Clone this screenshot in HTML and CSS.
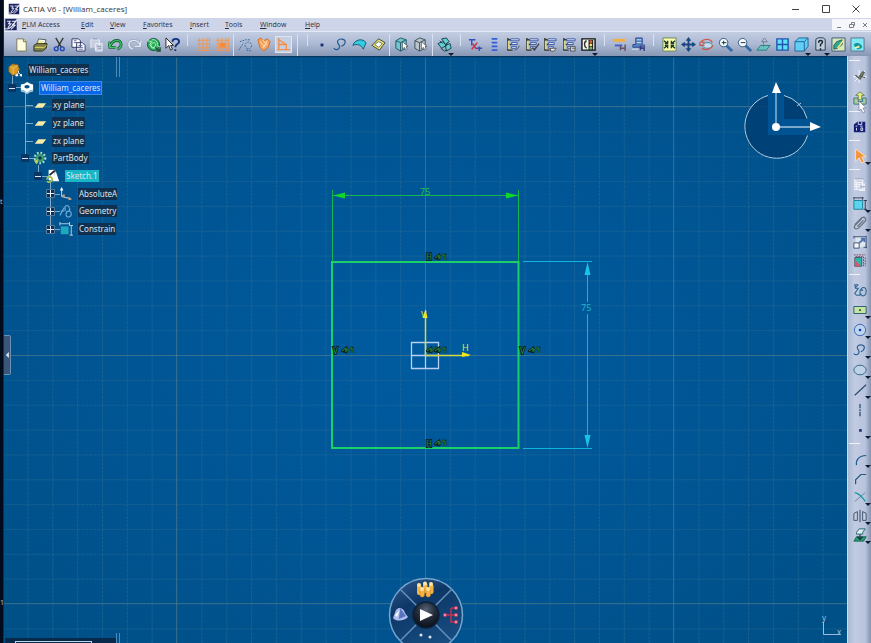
FILE: index.html
```html
<!DOCTYPE html>
<html lang="en">
<head>
<meta charset="utf-8">
<title>CATIA V6 - [William_caceres]</title>
<link rel="stylesheet" href="styles.css">
</head>
<body>
<svg class="defs" aria-hidden="true">
<defs>
<symbol id="logo" viewBox="0 0 16 16"><path d="M1 1h14v14H1z" fill="#1d2460"/><path d="M3 4h4L5 7h3L4 12M9 4h5l-4 4 3 1-5 5M0 13c5 2 10-2 15-11" fill="none" stroke="#e6ebf7" stroke-width="1.3"/></symbol>
<symbol id="new" viewBox="0 0 16 16"><path d="M3 2h7l3 3v10H3z" fill="#fffce0" stroke="#77775a"/><path d="M10 2v3h3" fill="#ddd9a0" stroke="#77775a"/></symbol>
<symbol id="print" viewBox="0 0 16 16"><path d="M6 2l8 1-2 5H4z" fill="#fff" stroke="#555"/><path d="M1 9l3-2h11l-1 5-4 3H1z" fill="#80804a" stroke="#30301a"/><path d="M2 11h9M11 12l3-3M6 4l5 1M5 6h5" stroke="#e8e36a"/></symbol>
<symbol id="cut" viewBox="0 0 16 16"><path d="M4 1l6 10M12 1L6 11" stroke="#333" stroke-width="1.4"/><circle cx="4.500" cy="12.500" r="2" fill="none" stroke="#1d48b8" stroke-width="1.5"/><circle cx="11" cy="12.500" r="2" fill="none" stroke="#1d48b8" stroke-width="1.500"/></symbol>
<symbol id="copy" viewBox="0 0 16 16"><path d="M1 2h7l2 2v7H1zM6 6h6l3 3v6H6z" fill="#fff" stroke="#313760"/><path d="M3 4h3M3 6h3M8 9h4M8 11h5M8 13h5" stroke="#5868a6"/></symbol>
<symbol id="paste" viewBox="0 0 16 16"><path d="M2 3h9v9H2zM7 7h7v8H7z" fill="#c6cddd" stroke="#e8edf7"/><path d="M4 2h5M9 10h4M9 12h4M2 12h4" stroke="#8994ad"/></symbol>
<symbol id="undo" viewBox="0 0 16 16"><path d="M1 5l1 6h6M2 10c3-8 12-8 12-2 0 3-2 4-4 5" fill="none" stroke="#16613a" stroke-width="3"/><path d="M1 5l1 6h6M2 10c3-8 12-8 12-2 0 3-2 4-4 5" fill="none" stroke="#42c967" stroke-width="1.300"/></symbol>
<symbol id="redo" viewBox="0 0 16 16"><path d="M15 4l-1 6H8M14 9C12 2 2 2 2 8c0 3 2 4 4 5" fill="none" stroke="#9aa5bd" stroke-width="3"/><path d="M15 4l-1 6H8M14 9C12 2 2 2 2 8c0 3 2 4 4 5" fill="none" stroke="#e1e7f1" stroke-width="1.500"/></symbol>
<symbol id="update" viewBox="0 0 16 16"><circle cx="8" cy="8" r="6.500" fill="#28ac57" stroke="#125432"/><path d="M2 4l4 1-2 3 3 4 5-1M6 3c5-1 7 3 6 6l3 2M8 6c3 0 3 4 0 5s-4-4 0-5" fill="none" stroke="#b7f5cf"/><path d="M10 11l5 4M11 15h4v-4" fill="none" stroke="#125432" stroke-width="1.500"/></symbol>
<symbol id="help" viewBox="0 0 16 16"><path d="M1 1v11l3-3 2 5 2-1-2-4h3z" fill="#fff" stroke="#222"/><path d="M8 5c0-4 7-4 7 0 0 3-4 2-4 6M11 13v2" fill="none" stroke="#153080" stroke-width="2"/></symbol>
<symbol id="grid" viewBox="0 0 16 16"><path d="M1 3.500h14M1 7.500h14M1 11.500h14M3.500 1v14M7.500 1v14M11.500 1v14M14.500 1v14M1 14.500h14" stroke="#f4974f"/></symbol>
<symbol id="snap" viewBox="0 0 16 16"><use href="#grid"/><path d="M5 6h6v5H5z" fill="#f58b36"/></symbol>
<symbol id="construct" viewBox="0 0 16 16"><circle cx="11" cy="9" r="3.500" fill="none" stroke="#3268a2" stroke-dasharray="2 1"/><path d="M1 14l5-8M2 5l6-2 5 0M9 14l6 1" fill="none" stroke="#3268a2" stroke-dasharray="2 1"/></symbol>
<symbol id="geocon" viewBox="0 0 16 16"><path d="M1 3l3-2 3 3 4-2 3 3-2 6-5 4-4-4z" fill="#f5a35f" stroke="#d46b23"/><path d="M3 5l6 6M6 3l5 6M11 4L6 12" stroke="#ffe1bc"/></symbol>
<symbol id="dimcon" viewBox="0 0 16 16"><path d="M3 1v13M3 8h8v6M1 13.500h14M3 3l8 5" fill="none" stroke="#f18e48" stroke-width="1.400"/></symbol>
<symbol id="dot" viewBox="0 0 16 16"><path d="M7 7h3v3H7z" fill="#152d70"/></symbol>
<symbol id="spline" viewBox="0 0 16 16"><path d="M1 12c2 3 6 1 6-2 0-2-3-3-2-6 2-3 8-2 8 1s-2 4-4 5" fill="none" stroke="#1c5791" stroke-width="1.200"/></symbol>
<symbol id="surface" viewBox="0 0 16 16"><path d="M1 9c1-5 9-9 14-3l-3 7c-2-5-7-6-11-4z" fill="#32cce1" stroke="#145875"/></symbol>
<symbol id="volume" viewBox="0 0 16 16"><path d="M1 9l7-7 7 4-6 8z" fill="#f3df71" stroke="#3d4938"/><path d="M4 8l4-3 4 2-4 4z" fill="#fff" stroke="#597f62"/></symbol>
<symbol id="select3d" viewBox="0 0 16 16"><path d="M2 4l5-3 6 2v9l-6 3-5-3z" fill="#72c8d1" stroke="#245465"/><path d="M7 15V6l6-3M7 6L2 4" fill="none" stroke="#245465"/><path d="M9 5v8l2-2 2 3 1-1-1-3h2z" fill="#fff" stroke="#333" stroke-width=".6"/></symbol>
<symbol id="gray3d" viewBox="0 0 16 16"><path d="M2 4l5-3 6 2v9l-6 3-5-3z" fill="#bbc5c9" stroke="#35505c"/><path d="M7 15V6l6-3M7 6L2 4" fill="none" stroke="#35505c"/><path d="M9 5v8l2-2 2 3 1-1-1-3h2z" fill="#fff" stroke="#333" stroke-width=".6"/></symbol>
<symbol id="assembly" viewBox="0 0 16 16"><path d="M5 2l5-1 3 4-4 3zM1 7l5-2 4 4-5 3zM9 9l5-2 1 5-5 3z" fill="#62cfd1" stroke="#163f49"/><path d="M4 12l4 3 3-1M3 4l3 3M11 6l-2 4" fill="none" stroke="#163f49"/></symbol>
<symbol id="cutpart" viewBox="0 0 16 16"><path d="M1 3h7M4 3v6M9 12h6M12 10v5" stroke="#304dc4" stroke-width="1.500"/><path d="M4 13l6-7M5 7l4 6" stroke="#d22845" stroke-width="1.500"/></symbol>
<symbol id="list" viewBox="0 0 16 16"><path d="M5 2h6M5 6h6M5 10h6M5 14h6" stroke="#345edb" stroke-width="2"/></symbol>
<symbol id="tree0" viewBox="0 0 16 16"><path d="M2 1v13h5M2 3h5M2 8h4" fill="none" stroke="#343827" stroke-width="1.500"/><path d="M3 4v9" stroke="#d9d68d" stroke-width="2"/><path d="M5 2h9v2H5zM6 6h6v2H6zM6 10h5v2H6z" fill="#eef1ff" stroke="#3958a5"/></symbol>
<symbol id="tree1" viewBox="0 0 16 16"><use href="#tree0"/><path d="M9 14c3 0 5-3 5-5" fill="none" stroke="#555"/></symbol>
<symbol id="tree2" viewBox="0 0 16 16"><use href="#tree0"/><path d="M8 11l2 3 5-7" fill="none" stroke="#444" stroke-width="1.500"/></symbol>
<symbol id="tree3" viewBox="0 0 16 16"><use href="#tree0"/><path d="M8 12h6l-2 3H8z" fill="#eee" stroke="#555"/></symbol>
<symbol id="tree4" viewBox="0 0 16 16"><use href="#tree0"/><path d="M9 10h5v5H9zM11 12h3" fill="#ccd" stroke="#555"/></symbol>
<symbol id="book" viewBox="0 0 16 16"><path d="M1 2h14v12H1z" fill="#f8f8ef" stroke="#111" stroke-width="1.500"/><path d="M6 4c-3 1-3 6 0 8" fill="none" stroke="#333" stroke-width="1.500"/><path d="M8 3h5v11H8z" fill="#222"/><circle cx="10.500" cy="5" r="1.500" fill="#d86a35"/><circle cx="10.500" cy="8.500" r="1.500" fill="#ffd968"/><circle cx="10.500" cy="12" r="1.500" fill="#60b777"/></symbol>
<symbol id="measure" viewBox="0 0 16 16"><path d="M1 2h13v3H1z" fill="#f5ad3c"/><path d="M3 8h8v2H3z" fill="#425fcc"/><path d="M9 9v5M14 8v7M9 12h5" stroke="#6a4d65" stroke-width="1.500"/></symbol>
<symbol id="measure2" viewBox="0 0 16 16"><path d="M5 1h7v10H2V8h3z" fill="#557fb6" stroke="#2b4aa2"/><path d="M6 3h5M6 6h5M1 13h7" stroke="#d2e5fa"/><path d="M10 9v5M14 8v7M10 12h4" stroke="#353b7d" stroke-width="1.500"/></symbol>
<symbol id="fit" viewBox="0 0 16 16"><path d="M1 1h14v14H1z" fill="#fff9a8" stroke="#608a58"/><path d="M2 4l4 3M14 4l-4 3M2 12l4-3M14 12l-4-3M3 7h3V4M10 4v3h3M3 9h3v3M13 9h-3v3" fill="none" stroke="#153f34" stroke-width="1.500"/></symbol>
<symbol id="pan" viewBox="0 0 16 16"><path d="M8 2v12M2 8h12" stroke="#1b477f" stroke-width="2"/><path d="M8 0l3 4H5zM8 16l3-4H5zM0 8l4-3v6zM16 8l-4-3v6z" fill="#1b477f"/></symbol>
<symbol id="rotate" viewBox="0 0 16 16"><ellipse cx="9" cy="9" rx="5" ry="3" fill="#c4dff0" stroke="#487c97"/><path d="M2 5c4-4 11-3 12 1M2 5l4 1M1 5v4h5M3 12c4 3 10 1 12-3" fill="none" stroke="#cf5949" stroke-width="1.400"/></symbol>
<symbol id="zoomin" viewBox="0 0 16 16"><circle cx="6" cy="6" r="4.500" fill="#f5fcff" stroke="#315777"/><path d="M9 9l6 6" stroke="#326caa" stroke-width="3"/><path d="M4 6h5M6 4v4" stroke="#132b48"/></symbol>
<symbol id="zoomout" viewBox="0 0 16 16"><circle cx="6" cy="6" r="4.500" fill="#f5fcff" stroke="#315777"/><path d="M9 9l6 6" stroke="#326caa" stroke-width="3"/><path d="M4 6h5" stroke="#132b48"/></symbol>
<symbol id="normal" viewBox="0 0 16 16"><path d="M1 14l4-5h10l-4 5z" fill="#6cc2bd" stroke="#277a80"/><path d="M8 11V4M6 5l3-4 3 4z" fill="#c0cbdb" stroke="#708095"/></symbol>
<symbol id="views" viewBox="0 0 16 16"><path d="M2 2h12v12H2zM8 2v12M2 8h12" fill="#5ce1f7" stroke="#2455af" stroke-width="1.500"/></symbol>
<symbol id="cube" viewBox="0 0 16 16"><path d="M1 5l4-4h10v9l-4 5H1z" fill="#62cef5" stroke="#20649a"/><path d="M1 5h10v10M11 5l4-4" fill="none" stroke="#20649a"/></symbol>
<symbol id="question" viewBox="0 0 16 16"><path d="M3 3c0-3 10-3 10 0v11H3z" fill="#bfccda" stroke="#26384d"/><path d="M6 6c0-3 5-3 4 0L8 8v2M8 12v2" fill="none" stroke="#13202c" stroke-width="1.500"/></symbol>
<symbol id="hide" viewBox="0 0 16 16"><path d="M1 1h14v14H1z" fill="#d8e9b8" stroke="#3f5877"/><path d="M3 9l3-4 6-2v5l-5 4-4 1z" fill="#35a68d" stroke="#216367"/><path d="M7 12l6-8" fill="none" stroke="#ffe687" stroke-width="1.500"/></symbol>
<symbol id="show" viewBox="0 0 16 16"><path d="M1 1h14v14H1z" fill="#83e8f6" stroke="#55738c"/><path d="M4 8c4-4 9 0 9 3-4 4-7 2-9-3z" fill="#14959d"/><path d="M5 12l5-2" stroke="#fff7a1" stroke-width="2"/></symbol>
<symbol id="axis" viewBox="0 0 16 16"><path d="M0 9h16M7 1v15M2 14L14 2" stroke="#f8faff"/><path d="M3 7l3 3 5-7 2 1-5 8z" fill="#7e8d5c" stroke="#3c3e3c"/><path d="M8 8l6 2" stroke="#444"/></symbol>
<symbol id="exit" viewBox="0 0 16 16"><path d="M1 8h5v4h5V8h4v7H1z" fill="#b6c89a" stroke="#267187"/><path d="M6 10V5H3l5-4 5 4h-3v5z" fill="#eded7d" stroke="#627f51"/></symbol>
<symbol id="catalog" viewBox="0 0 16 16"><path d="M1 5l4-3h9v12H1z" fill="#151d75"/><path d="M6 2v3h4V2M3 7h2M8 7h3M4 9v3M9 9h2v3H9z" fill="none" stroke="#e7efff"/></symbol>
<symbol id="arrow" viewBox="0 0 16 16"><path d="M3 0v14l4-4 3 6 3-1-3-6h5z" fill="#f39237" stroke="#ffe2c6"/></symbol>
<symbol id="dialog" viewBox="0 0 16 16"><path d="M2 2h9v3H2zM2 7h5v3H2zM7 7h6v7H7M1 13h10M4 4v8M11 5v8" fill="none" stroke="#eef1f7" stroke-width="1.500"/><path d="M2 1h10M9 10h5" stroke="#939db4"/></symbol>
<symbol id="constrain" viewBox="0 0 16 16"><path d="M1 4h10v10H1z" fill="#59d5ef" stroke="#16778e"/><path d="M1 1h11M1 0v3M11 0v3M14 4v11M12 4h4M12 14h4" stroke="#22334c"/></symbol>
<symbol id="clip" viewBox="0 0 16 16"><path d="M2 10l8-8c4-2 6 2 3 5l-7 7c-4 2-6-1-3-4l7-7M5 12l7-7" fill="none" stroke="#697483" stroke-width="1.500"/></symbol>
<symbol id="animate" viewBox="0 0 16 16"><path d="M3 2h11v12H3z" fill="#dbe6ed"/><path d="M1 2h14M1 1v3M15 1v14M12 14h4" stroke="#34456f"/><path d="M1 9h6v6H1z" fill="#f4f8fa" stroke="#34456f"/><path d="M7 9l6-5M9 4h4v4" fill="none" stroke="#4d70ae" stroke-width="2"/></symbol>
<symbol id="multi" viewBox="0 0 16 16"><path d="M2 4h8v10H2z" fill="#28b7ad" stroke="#425064"/><path d="M2 6l7 8H2z" fill="#d8596f"/><path d="M1 1h13M3 3h9v12M14 4v10" fill="none" stroke="#7b384d" stroke-dasharray="2 1"/></symbol>
<symbol id="profile" viewBox="0 0 16 16"><path d="M6 2H2l1 4h3L2 12l2 2h4V9c0-2 3-2 3 0M6 2l-4 4M9 9c0-5 6-5 6 0 0 7-6 7-6 3" fill="none" stroke="#276490" stroke-width="1.200"/></symbol>
<symbol id="rect" viewBox="0 0 16 16"><path d="M1 4h14v8H1z" fill="#c6e5a0" stroke="#175368"/><path d="M7 7h2v2H7z" fill="#264a33"/></symbol>
<symbol id="circle" viewBox="0 0 16 16"><circle cx="8" cy="8" r="6.500" fill="#bbd4ef" stroke="#315fa3"/><circle cx="8" cy="8" r="1.500" fill="#1841a0"/></symbol>
<symbol id="ellipse" viewBox="0 0 16 16"><ellipse cx="8" cy="8" rx="7" ry="5.500" fill="#bed2e7" stroke="#295b7e"/></symbol>
<symbol id="line" viewBox="0 0 16 16"><path d="M2 14L15 2" stroke="#24466b" stroke-width="1.200"/></symbol>
<symbol id="dash" viewBox="0 0 16 16"><path d="M8 1v14" stroke="#1f4770" stroke-width="1.400" stroke-dasharray="5 1 2 1"/></symbol>
<symbol id="corner" viewBox="0 0 16 16"><path d="M4 15c-1-6 3-11 11-11" fill="none" stroke="#195d8a" stroke-width="1.400"/></symbol>
<symbol id="chamfer" viewBox="0 0 16 16"><path d="M3 15v-5l6-6h6" fill="none" stroke="#205c7b" stroke-width="1.400"/></symbol>
<symbol id="trim" viewBox="0 0 16 16"><path d="M2 13L14 3" stroke="#687c9d"/><path d="M2 3c6 1 9 6 12 10" fill="none" stroke="#119c9b" stroke-width="1.500"/></symbol>
<symbol id="mirror" viewBox="0 0 16 16"><path d="M1 5l4-2v10H1zM15 5l-4-2v10h4z" fill="#c3d1df" stroke="#354765"/><path d="M8 1v14" stroke="#24355a"/></symbol>
<symbol id="project" viewBox="0 0 16 16"><path d="M1 15l3-5h11l-3 5z" fill="#289b72" stroke="#14624c"/><path d="M4 5l3-4h7l-3 4v2H4z" fill="#dceeee" stroke="#175c68"/><path d="M8 7v6M5 10l3 3 3-3" fill="none" stroke="#1e3448" stroke-width="1.300"/></symbol>
<symbol id="minus" viewBox="0 0 8 8"><path d="M0 0h8v8H0z" fill="#0b3564"/><path d="M1 4.500h6" stroke="#d8e6f4"/></symbol>
<symbol id="plus" viewBox="0 0 9 9"><path d="M.5.5h8v8h-8z" fill="#0b3158" stroke="#56799c"/><path d="M1 4.500h7M4.500 1v7" stroke="#e5eef6"/></symbol>
<symbol id="product" viewBox="0 0 16 16"><path d="M1 5l4-4 6 1 2 5-3 6-5 1-4-4z" fill="#d69826" stroke="#80601f"/><path d="M6 6l5-3M6 6v7M2 4l4 2" stroke="#efc65d"/><path d="M12 9v2l-2 3M12 11l3 3" stroke="#fff" fill="none"/><circle cx="10" cy="14" r="1.500" fill="#fff"/><circle cx="15" cy="14" r="1.500" fill="#fff"/></symbol>
<symbol id="part" viewBox="0 0 16 16"><path d="M1 4l4-1 3-2 4 2 3 1v6l-4 1-3 3-3-3-4-1z" fill="#f8ffff"/><path d="M1 10l4 1 3 3 3-3 4-1v2l-4 1-3 2-3-2-4-1z" fill="#a4c8e0"/><ellipse cx="8" cy="6.500" rx="3" ry="2" fill="#0a4e84"/></symbol>
<symbol id="plane" viewBox="0 0 16 16"><path d="M2 11l4-5h9l-4 5z" fill="#f7eba9"/></symbol>
<symbol id="gear" viewBox="0 0 16 16"><circle cx="8" cy="8" r="4.500" fill="#3e9d72"/><circle cx="8" cy="8" r="6" fill="none" stroke="#a8e1bf" stroke-width="2.500" stroke-dasharray="2 2"/><circle cx="8" cy="8" r="2" fill="#10354b"/><path d="M1 11l5-2-2 6z" fill="#bdcc56"/></symbol>
<symbol id="sketch" viewBox="0 0 16 16"><path d="M3 1h7v12H3z" fill="#fff"/><path d="M11 2l4 12H8z" fill="#fff"/><path d="M4 7l6-5" stroke="#222" stroke-width="2"/><path d="M1 12c1-4 6-4 6 0 0 3-4 4-6 2" fill="none" stroke="#9fc34c" stroke-width="2"/></symbol>
<symbol id="axes" viewBox="0 0 16 16"><path d="M3 2v9l9 2" fill="none" stroke="#d7e9f0"/><path d="M1 4l2-4 2 4z" fill="#fff"/><path d="M3 10l3-2 1 3zM11 11l4 3-4 1z" fill="#f0a070"/></symbol>
<symbol id="geo" viewBox="0 0 16 16"><path d="M1 13l5-9M2 8h4M7 8V3c3-4 6 2 5 5M8 12c0-5 6-5 6-1 0 5-6 5-6 1z" fill="none" stroke="#71abd8" stroke-width="1.300"/></symbol>
<symbol id="folder" viewBox="0 0 16 16"><path d="M2 5h9v9H2z" fill="#1fa7c0"/><path d="M1 2h11M1 0v4M12 0v4M14 4v11M12 4h4M12 15h4" stroke="#bbdbe9"/></symbol>
<symbol id="lock" viewBox="0 0 14 8"><path d="M1 5l4-3v4zM5 4h3M8 2h3v5" fill="none" stroke="#09251c" stroke-width="2.500"/><path d="M1 5l4-3v4M5 4h3M8 2h3v5" fill="none" stroke="#2d9142"/></symbol>
</defs>
</svg>

<div class="app">
  <aside class="edge"><span>t</span><span>1</span></aside>
  <div class="window">
    <header class="titlebar">
      <svg class="logo"><use href="#logo"/></svg>
      <h1>CATIA V6 - [William_caceres]</h1>
      <div class="window-controls">
        <button aria-label="Minimize"><svg viewBox="0 0 10 10"><path d="M1 5.500h7"/></svg></button>
        <button aria-label="Maximize"><svg viewBox="0 0 10 10"><path d="M1.500 1.500h7v7h-7z"/></svg></button>
        <button aria-label="Close"><svg viewBox="0 0 10 10"><path d="M1.500 1.500l7 7M8.500 1.500l-7 7"/></svg></button>
      </div>
    </header>
    <nav class="menubar">
      <svg class="logo menu-logo"><use href="#logo"/></svg>
      <button class="plm"><u>P</u>LM Access</button><button><u>E</u>dit</button><button><u>V</u>iew</button><button class="fav"><u>F</u>avorites</button><button><u>I</u>nsert</button><button><u>T</u>ools</button><button class="wide"><u>W</u>indow</button><button><u>H</u>elp</button>
      <div class="doc-controls">
        <button aria-label="Minimize document"><svg viewBox="0 0 8 8"><path d="M2 6.500h4"/></svg></button>
        <button aria-label="Restore document"><svg viewBox="0 0 8 8"><path d="M1.500 3.500h4v3h-4zM3.500 3V1.500h3v3H6"/></svg></button>
        <button aria-label="Close document"><svg viewBox="0 0 8 8"><path d="M2 2l4 4M6 2L2 6"/></svg></button>
      </div>
    </nav>
    <div class="toolbar" role="toolbar" aria-label="Standard">
      <button aria-label="New"><svg><use href="#new"/></svg></button><button aria-label="Print"><svg><use href="#print"/></svg></button><button aria-label="Cut"><svg><use href="#cut"/></svg></button><button aria-label="Copy"><svg><use href="#copy"/></svg></button><button aria-label="Paste"><svg><use href="#paste"/></svg></button><button aria-label="Undo"><svg><use href="#undo"/></svg></button><button aria-label="Redo"><svg><use href="#redo"/></svg></button><button aria-label="Update"><svg><use href="#update"/></svg></button><button aria-label="Help"><svg><use href="#help"/></svg></button>
      <i class="sep handle"></i>
      <button aria-label="Grid"><svg><use href="#grid"/></svg></button><button aria-label="Snap to point"><svg><use href="#snap"/></svg></button>
      <i class="sep rule"></i>
      <button aria-label="Construction element"><svg><use href="#construct"/></svg></button><button aria-label="Geometrical constraints"><svg><use href="#geocon"/></svg></button><button class="active" aria-label="Dimensional constraints"><svg><use href="#dimcon"/></svg></button>
      <i class="sep rule handle double"></i>
      <button aria-label="Point filter"><svg><use href="#dot"/></svg></button><button aria-label="Curve filter"><svg><use href="#spline"/></svg></button><button aria-label="Surface filter"><svg><use href="#surface"/></svg></button><button aria-label="Volume filter"><svg><use href="#volume"/></svg></button>
      <i class="sep rule"></i>
      <button aria-label="Feature filter"><svg><use href="#select3d"/></svg></button><button aria-label="Geometry filter"><svg><use href="#gray3d"/></svg></button>
      <i class="sep rule"></i>
      <button class="more" aria-label="Assembly"><svg><use href="#assembly"/></svg></button>
      <i class="sep handle"></i>
      <button aria-label="Cut link"><svg><use href="#cutpart"/></svg></button><button aria-label="List"><svg><use href="#list"/></svg></button><button aria-label="Reorder"><svg><use href="#tree1"/></svg></button><button aria-label="Check tree"><svg><use href="#tree2"/></svg></button><button aria-label="Expand tree"><svg><use href="#tree3"/></svg></button><button aria-label="Collapse tree"><svg><use href="#tree4"/></svg></button><button class="more" aria-label="Catalog"><svg><use href="#book"/></svg></button>
      <i class="sep handle"></i>
      <button aria-label="Measure between"><svg><use href="#measure"/></svg></button><button aria-label="Measure item"><svg><use href="#measure2"/></svg></button>
      <i class="sep handle"></i>
      <button aria-label="Fit all"><svg><use href="#fit"/></svg></button><button aria-label="Pan"><svg><use href="#pan"/></svg></button><button aria-label="Rotate"><svg><use href="#rotate"/></svg></button><button aria-label="Zoom in"><svg><use href="#zoomin"/></svg></button><button aria-label="Zoom out"><svg><use href="#zoomout"/></svg></button><button aria-label="Normal view"><svg><use href="#normal"/></svg></button><button aria-label="Multi-view"><svg><use href="#views"/></svg></button><button class="more" aria-label="Isometric view"><svg><use href="#cube"/></svg></button><button class="more" aria-label="View mode"><svg><use href="#question"/></svg></button><button aria-label="Hide or show"><svg><use href="#hide"/></svg></button><button aria-label="Swap visible space"><svg><use href="#show"/></svg></button>
    </div>

    <div class="workspace">
      <main class="canvas">
        <svg class="drawing" viewBox="4 56 843 587" preserveAspectRatio="xMidYMid slice" aria-label="Sketch">
          <defs>
            <radialGradient id="sea" cx=".5" cy=".5" r=".65"><stop offset="0" stop-color="#005ba0"/><stop offset=".5" stop-color="#005695"/><stop offset="1" stop-color="#005088"/></radialGradient>
            <pattern id="minor" x="425" y="355" width="24.850" height="24.850" patternUnits="userSpaceOnUse"><path d="M0 .5h25M.5 0v25" stroke="#3f7897" stroke-opacity=".36" stroke-dasharray="3 1"/></pattern>
          </defs>
          <path d="M4 56h844v587H4z" fill="url(#sea)"/>
          <path d="M4 56h844v587H4z" fill="url(#minor)"/>
          <path d="M176.500 56v587M425.500 56v587M673.500 56v587M4 106.500h844M4 355.500h844M4 603.500h844" stroke="#6d8c84" stroke-opacity=".4"/>
          <path d="M4 56.500h844" stroke="#003965" stroke-width="2"/>

          <g fill="none" stroke="#19c740"><path d="M332.500 190v72M518.500 190v72M333 195.500h185" stroke-opacity=".85"/><path d="M332 262h186.500v186H332z" stroke="#1bd066" stroke-width="2"/></g>
          <path d="M333 195.500l12-3v6zM518 195.500l-12-3v6z" fill="#12d52c"/>
          <path d="M523 261.500h69M523 448.500h69M587.500 265v37M587.500 314v130" stroke="#13b4dc"/>
          <path d="M587.500 262l-3 13h6zM587.500 448l-3-13h6z" fill="#18c4e6"/>
          <text class="dim green" x="420" y="195">75</text>
          <text class="dim cyan" x="581" y="311">75</text>

          <path d="M411.500 342.500h27v26h-27zM411 355.500h28M425.500 342v27" fill="none" stroke="#b7cff1" stroke-width="1.300"/>
          <path d="M425.500 355.500V314M425 355.500h44" stroke="#d8d844" stroke-width="1.500"/>
          <path d="M425.500 309l-3 9h5zM471 355l-9-3v5z" fill="#f0e621"/>
          <text class="dim axis" x="421" y="318">V</text><text class="dim axis" x="462" y="351">H</text>
          <g class="constraint"><text x="426" y="260">H</text><text x="426" y="447">H</text><text x="333" y="354">V</text><text x="520" y="354">V</text></g>
          <use href="#lock" x="434" y="253" width="14" height="8"/><use href="#lock" x="434" y="439" width="14" height="8"/><use href="#lock" x="341" y="346" width="14" height="8"/><use href="#lock" x="528" y="346" width="14" height="8"/><use href="#lock" x="426" y="346" width="14" height="8"/><use href="#lock" x="434" y="346" width="14" height="8"/>

          <circle cx="776" cy="126.500" r="32" fill="#003f73" fill-opacity=".85"/>
          <path d="M768 90h16v29h30v16h-46z" fill="#005393"/>
          <path d="M784 119V96c12 3 20 11 23 23z" fill="#003f73"/>
          <path d="M768 95.500a32 32 0 1 0 39.500 40M784 95.500a32 32 0 0 1 23 23M797 106l4-3" fill="none" stroke="#b3cee3"/>
          <path d="M776 126V91M776 127h36" stroke="#a4c3dc" stroke-width="1.300"/>
          <circle cx="776" cy="127" r="4" fill="#fff"/><path d="M776 82l-4 11h9zM821 127l-11-5v9z" fill="#fff"/>
          <path d="M823.500 622v12.500h17" fill="none" stroke="#9abddd"/>
          <text class="tag" x="822" y="621">y</text><text class="tag" x="837" y="635">x</text>
        </svg>

        <aside class="tree-panel">
          <svg class="branches" viewBox="0 0 116 177"><path d="M8.500 15v10M12 26.500h9M21.500 31v66M22 44.500h7M22 62.500h7M22 80.500h7M25 97.500h6M34.500 104v11M38 115.500h7M46.500 122v50M50 133.500h6M50 150.500h6M50 168.500h6"/></svg>
          <ul class="tree">
            <li class="root"><svg><use href="#product"/></svg><span>William_caceres</span></li>
            <li class="l1"><button aria-label="Collapse"><svg><use href="#minus"/></svg></button><svg><use href="#part"/></svg><span class="selected">William_caceres</span></li>
            <li class="l2"><svg><use href="#plane"/></svg><span>xy plane</span></li>
            <li class="l2"><svg><use href="#plane"/></svg><span>yz plane</span></li>
            <li class="l2"><svg><use href="#plane"/></svg><span>zx plane</span></li>
            <li class="body"><button aria-label="Collapse"><svg><use href="#minus"/></svg></button><svg><use href="#gear"/></svg><span>PartBody</span></li>
            <li class="l3"><button aria-label="Collapse"><svg><use href="#minus"/></svg></button><svg><use href="#sketch"/></svg><span class="current">Sketch.1</span></li>
            <li class="l4"><button aria-label="Expand"><svg><use href="#plus"/></svg></button><svg><use href="#axes"/></svg><span>AbsoluteA</span></li>
            <li class="l4"><button aria-label="Expand"><svg><use href="#plus"/></svg></button><svg><use href="#geo"/></svg><span>Geometry</span></li>
            <li class="l4"><button aria-label="Expand"><svg><use href="#plus"/></svg></button><svg><use href="#folder"/></svg><span>Constrain</span></li>
          </ul>
        </aside>
        <i class="splitter"></i><i class="splitter bottom"></i>
        <button class="drawer" aria-label="Open side panel"><svg viewBox="0 0 5 8"><path d="M5 0v8L1 4z" fill="#dce9f5"/></svg></button>
        <div class="dock"><i></i></div>

        <div class="wheel">
          <svg viewBox="0 0 76 76" class="wheel-art" aria-hidden="true">
            <defs><linearGradient id="disc" x2=".5" y2="1"><stop stop-color="#355f91"/><stop offset=".4" stop-color="#0d3767"/><stop offset="1" stop-color="#174d81"/></linearGradient><radialGradient id="play" cx=".5" cy=".3" r=".7"><stop stop-color="#586579"/><stop offset=".5" stop-color="#222b38"/><stop offset="1" stop-color="#080f18"/></radialGradient></defs>
            <circle cx="38" cy="38" r="36.500" fill="url(#disc)" stroke="#76a5d0" stroke-width="1.500"/>
            <path d="M12 12l17 17M64 12L47 29M12 64l17-17M64 64L47 47" stroke="#668fba" stroke-width="1.500"/>
            <circle cx="38" cy="38" r="13" fill="url(#play)" stroke="#0c223b" stroke-width="1.500"/>
            <path d="M32 32l13 6-13 6z" fill="#fff"/>
            <g fill="#f6b543"><rect x="29" y="8" width="4.500" height="10" rx="2"/><rect x="35" y="6" width="4.500" height="10" rx="2"/><rect x="41" y="7" width="4.500" height="10" rx="2"/><rect x="32" y="11" width="4.500" height="9" rx="2" stroke="#c58128" stroke-width=".5"/><rect x="38" y="11" width="4.500" height="9" rx="2" stroke="#c58128" stroke-width=".5"/></g><g fill="#ffe59f"><circle cx="31" cy="8" r="2"/><circle cx="37" cy="6.500" r="2"/><circle cx="43" cy="7" r="2"/><circle cx="34" cy="12" r="2"/><circle cx="40" cy="12" r="2"/></g>
            <path d="M5 41l3-8c4-4 8-1 9 3l3 4c-3 4-12 5-15 1z" fill="#aebbf0"/><path d="M12 31l6 8-7 3z" fill="#5974be"/><path d="M7 38l5-5-3 7z" fill="#fff"/>
            <path d="M57 38h13M63 31h7M63 31v14h7" fill="none" stroke="#bf3154" stroke-width="1.500"/><g fill="#f08aa1" stroke="#bf3154" stroke-width=".8"><circle cx="57" cy="38" r="1.700"/><circle cx="68" cy="31" r="1.700"/><circle cx="68" cy="38" r="1.700"/><circle cx="68" cy="45" r="1.700"/></g>
            <circle cx="33" cy="58" r="1.500" fill="#dce7ec"/><circle cx="42" cy="60" r="1.500" fill="#dce7ec"/>
          </svg>
          <button class="north" aria-label="Community"></button><button class="west" aria-label="Model"></button><button class="middle" aria-label="Play"></button><button class="east" aria-label="Structure"></button>
        </div>
      </main>

      <div class="sidebar" role="toolbar" aria-label="Sketch tools">
        <div class="group first"><button aria-label="Work on support"><svg><use href="#axis"/></svg></button><button aria-label="Exit workbench"><svg><use href="#exit"/></svg></button></div>
        <div class="group"><button aria-label="Catalog browser"><svg><use href="#catalog"/></svg></button></div>
        <div class="group"><button class="more" aria-label="Select"><svg><use href="#arrow"/></svg></button></div>
        <div class="group"><button aria-label="Constraint dialog"><svg><use href="#dialog"/></svg></button><button class="more" aria-label="Constraint"><svg><use href="#constrain"/></svg></button><button class="more" aria-label="Fix together"><svg><use href="#clip"/></svg></button><button aria-label="Animate constraint"><svg><use href="#animate"/></svg></button><button aria-label="Edit multi-constraint"><svg><use href="#multi"/></svg></button></div>
        <div class="group spaced"><button aria-label="Profile"><svg><use href="#profile"/></svg></button><button class="more" aria-label="Rectangle"><svg><use href="#rect"/></svg></button><button class="more" aria-label="Circle"><svg><use href="#circle"/></svg></button><button class="more" aria-label="Spline"><svg><use href="#spline"/></svg></button><button class="more" aria-label="Ellipse"><svg><use href="#ellipse"/></svg></button><button class="more" aria-label="Line"><svg><use href="#line"/></svg></button><button aria-label="Axis"><svg><use href="#dash"/></svg></button><button class="more" aria-label="Point"><svg><use href="#dot"/></svg></button></div>
        <div class="group"><button class="more" aria-label="Corner"><svg><use href="#corner"/></svg></button><button aria-label="Chamfer"><svg><use href="#chamfer"/></svg></button><button class="more" aria-label="Trim"><svg><use href="#trim"/></svg></button><button class="more" aria-label="Mirror"><svg><use href="#mirror"/></svg></button><button class="more" aria-label="Project"><svg><use href="#project"/></svg></button></div>
        <svg class="cursor" viewBox="0 0 9 14" aria-hidden="true"><path d="M1 1v10l2-2 2 4 2-1-2-4h3z" fill="#fff" stroke="#63718a" stroke-width=".6"/></svg>
      </div>
    </div>
  </div>
</div>
</body>
</html>
```
FILE: styles.css
```css
* { box-sizing: border-box; }
body { margin: 0; overflow: hidden; background: #005493; font-family: "Noto Sans", "Open Sans", sans-serif; }
h1, ul { margin: 0; padding: 0; font: inherit; }
button { padding: 0; border: 0; background: none; color: inherit; font: inherit; }
svg { display: block; }
.defs { position: absolute; width: 0; height: 0; }

.app { display: flex; height: 100vh; }
.edge { flex: 0 0 4px; display: grid; grid-template-rows: 206px 401px 1fr; overflow: hidden; background: #020b1c; border-right: 1px solid #0b3154; color: #b9c2ca; font-size: 7px; line-height: 8px; }
.edge span { align-self: end; }
.window { flex: 1; min-width: 0; display: flex; flex-direction: column; }

.titlebar { display: flex; align-items: center; height: 18px; padding-left: 4px; background: #fff; color: #30323a; font-family: "Open Sans", sans-serif; font-size: 8px; line-height: 12px; }
.logo { width: 12px; height: 12px; margin-right: 3px; }
.window-controls { display: flex; margin-left: auto; }
.window-controls button { width: 30px; height: 16px; display: grid; place-items: center; }
.window-controls svg { width: 10px; height: 10px; }
.window-controls path, .doc-controls path { fill: none; stroke: #404047; stroke-width: 1; }

.menubar { display: flex; align-items: center; height: 13px; background: #cfd5e9; color: #292d3c; font-family: "Open Sans", sans-serif; font-size: 7px; line-height: 12px; }
.menu-logo { width: 14px; height: 13px; margin-right: 4px; flex: none; }
.menubar > button { width: 30px; margin-right: 9px; text-align: left; white-space: nowrap; height: 13px; }
.menubar > button:nth-of-type(2) { width: 20px; }
.menubar > button:nth-of-type(3) { width: 24px; }
.menubar > .plm { width: 50px; }
.menubar > .fav { width: 38px; }
.menubar > button:nth-of-type(5), .menubar > button:nth-of-type(6) { width: 26px; }
.menubar > .wide { width: 36px; }
.menubar u { text-underline-offset: 1px; }
.doc-controls { display: flex; height: 11px; margin-left: auto; background: #f6f7fb; }
.doc-controls button { width: 13px; display: grid; place-items: center; }
.doc-controls svg { width: 8px; height: 8px; }
.doc-controls path { stroke: #777e8e; }

.toolbar { display: flex; height: 25px; padding: 1px 4px 0 8px; align-items: center; border-top: 1px solid #e3e9f5; background: linear-gradient(#c3cde2, #acb9d3 50%, #8797b5); }
.toolbar button { position: relative; flex: 1 1 0; min-width: 0; height: 22px; display: grid; place-items: center; }
.toolbar button svg { width: 15px; height: 15px; }
.toolbar .active svg { background: #c6cfe1; outline: 1px solid #dfe5f0; }
.sep { flex: 0 0 5px; height: 22px; display: flex; justify-content: center; }
.sep.handle { flex-basis: 12px; }
.sep.double { flex-basis: 19px; justify-content: space-around; }
.sep::before { content: ""; width: 1px; height: 22px; background: #d8e1ef; }
.sep.handle::before { height: 12px; }
.sep.double::before { height: 22px; }
.sep.double::after { content: ""; width: 1px; height: 12px; background: #d8e1ef; }
.more::after { content: ""; position: absolute; right: 0; bottom: 0; border: 3px solid transparent; border-top-color: #111b2d; border-bottom: 0; }

.workspace { flex: 1; display: flex; min-height: 0; }
.canvas { position: relative; flex: 1; min-width: 0; overflow: hidden; background: #005493; }
.drawing { position: absolute; inset: 0; width: 100%; height: 100%; }
.dim { font-size: 9px; }
.green { fill: #1bc444; }
.cyan { fill: #20b4cb; }
.axis { fill: #dde34e; }
.constraint { fill: #2d9142; stroke: #09251c; stroke-width: 2px; paint-order: stroke; font-size: 8px; }
.tag { fill: #9fbfdb; font-size: 8px; }

.tree-panel { position: relative; width: 113px; height: 182px; padding-top: 5px; overflow: hidden; }
.branches { position: absolute; left: 0; top: 5px; width: 116px; height: 177px; fill: none; stroke: #7fa7c8; }
.tree { position: relative; height: 177px; display: grid; grid-template-rows: repeat(10, 1fr); list-style: none; color: #dce5ec; font-size: 8px; line-height: 12px; white-space: nowrap; }
.tree li { display: flex; align-items: center; gap: 4px; }
.tree li > svg { width: 14px; height: 14px; flex: none; }
.tree li button svg { width: 8px; height: 8px; }
.tree li.l4 button svg { width: 9px; height: 9px; }
.tree span { background: #10304f; padding: 0 1px; }
.tree .selected { background: #0867eb; outline: 1px solid #4089e0; }
.tree .current { background: #19b7c5; }
.tree .root { padding-left: 4px; gap: 6px; }
.tree .l1 { padding-left: 4px; }
.tree .l1 span { margin-left: 2px; }
.tree .l2 { padding-left: 29px; gap: 5px; }
.tree .body { padding-left: 17px; }
.tree .body span { margin-left: 1px; }
.tree .l3 { padding-left: 30px; }
.tree .l3 span { margin-left: 1px; }
.tree .l4 { padding-left: 42px; }
.tree .l4 span { margin-left: 1px; }
.splitter { position: absolute; left: 112px; top: 1px; width: 4px; height: 20px; border: 1px solid #4e8bb9; border-width: 0 1px; }
.splitter.bottom { top: auto; bottom: 0; height: 10px; }
.drawer { position: absolute; left: 0; top: 279px; width: 7px; height: 40px; display: grid; place-items: center; border: 1px solid #6d91b1; border-left: 0; border-radius: 0 2px 2px 0; background: #39577a; }
.drawer svg { width: 4px; height: 6px; }
.dock { position: absolute; left: 1px; bottom: 0; width: 111px; height: 5px; padding: 3px 0 0 10px; background: #06294c; }
.dock i { display: block; width: 77px; height: 2px; border: 1px solid #c2d4e2; border-bottom: 0; }

.wheel { position: absolute; left: 50%; bottom: -10px; width: 76px; height: 76px; margin-left: -38px; display: grid; grid-template: repeat(3, 1fr) / repeat(3, 1fr); }
.wheel-art { position: absolute; inset: 0; width: 76px; height: 76px; }
.wheel button { position: relative; }
.north { grid-area: 1 / 2; }
.west { grid-area: 2 / 1; }
.middle { grid-area: 2 / 2; }
.east { grid-area: 2 / 3; }

.sidebar { position: relative; flex: 0 0 24px; background: linear-gradient(90deg, #a9b8d2, #c1cce3 30%, #b8c3dc 75%, #8593b1); border-left: 1px solid #d1daea; }
.group { display: flex; flex-direction: column; padding-top: 10px; position: relative; }
.group::before { content: ""; position: absolute; top: 4px; left: 1px; width: 11px; height: 1px; background: #eef2fa; }
.group.first { gap: 3px; }
.group.spaced { gap: 1px; }
.sidebar button { position: relative; width: 100%; height: 19px; display: grid; place-items: center; }
.sidebar button svg { width: 14px; height: 14px; }
.cursor { position: absolute; left: 10px; top: 44px; width: 9px; height: 14px; }
```
